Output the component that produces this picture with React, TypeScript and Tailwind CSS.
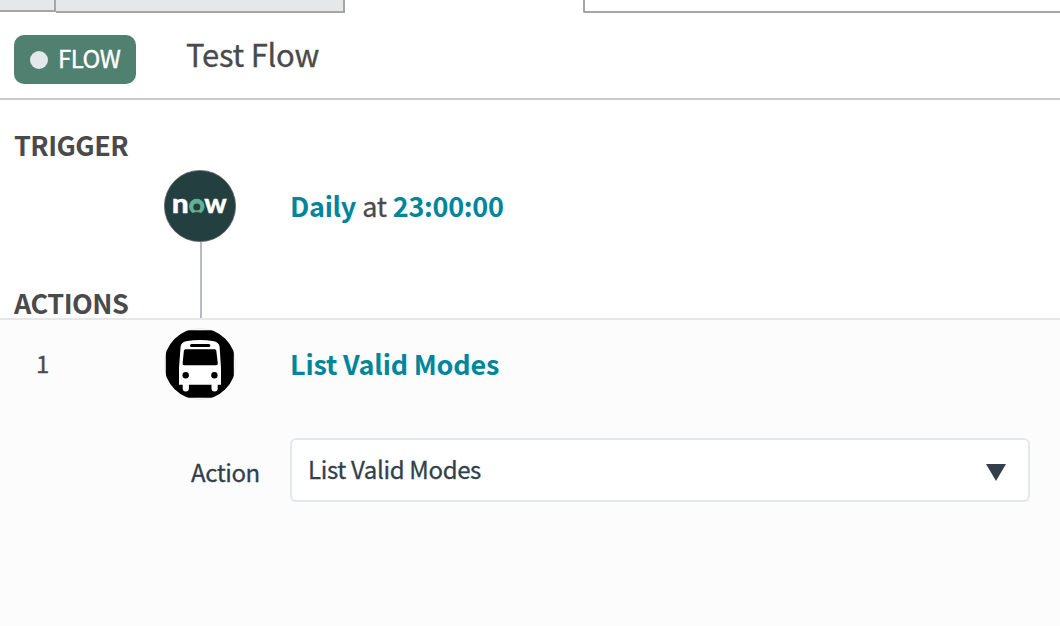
import React from "react";

function NowLogo() {
  return (
    <svg width="72" height="72" viewBox="0 0 72 72" className="block" aria-label="now">
      <circle cx="36" cy="36" r="35.6" fill="#233f40" stroke="#6b6464" strokeWidth="0.8" />
      <g fill="#ffffff" stroke="#ffffff" strokeWidth="0.3" fontFamily="Lato, sans-serif" fontWeight="900" fontSize="26">
        <text x="7.8" y="43" textLength="17" lengthAdjust="spacingAndGlyphs">n</text>
        <text x="40.3" y="43" textLength="22.5" lengthAdjust="spacingAndGlyphs">w</text>
      </g>
      <path
        d="M27.9 42.6A7.8 7.8 0 1 1 37.7 42.6Q36.8 43.4 35.8 42.6Q32.8 41.3 29.8 42.6Q28.8 43.4 27.9 42.6Z"
        fill="#62af95"
      />
      <circle cx="32.8" cy="36.9" r="3.5" fill="#233f40" />
    </svg>
  );
}

function BusIcon() {
  return (
    <svg width="72" height="72" viewBox="0 0 72 72" className="block" aria-label="bus">
      <circle cx="36" cy="36" r="35.5" fill="#ffffff" stroke="#e4e4e4" strokeWidth="0.8" />
      <clipPath id="bus-plate">
        <rect x="1.8" y="2.2" width="68" height="67.6" />
      </clipPath>
      <circle cx="36" cy="36" r="35.8" fill="#000" clipPath="url(#bus-plate)" />
      <path
        d="M16.6 18.5Q17 14.5 22 13.3Q36 10.7 50 13.3Q55 14.5 55.6 18.5L57 40V56.8H53.7V60.4Q53.7 63.4 50.6 63.4Q47.5 63.4 47.5 60.4V56.8H24.9V60.4Q24.9 63.4 21.8 63.4Q18.7 63.4 18.7 60.4V56.8H15V40Z"
        fill="#fff"
      />
      <rect x="26" y="16" width="20.3" height="3" rx="1.5" fill="#000" />
      <path d="M21.5 21.3H50.7Q52.1 21.3 52.3 22.8L53.8 35.3Q54 37.2 52 37.2H20.3Q18.4 37.2 18.6 35.3L19.9 22.8Q20.1 21.3 21.5 21.3Z" fill="#000" />
      <circle cx="21.7" cy="47.2" r="3.2" fill="#000" />
      <circle cx="50.4" cy="47.2" r="3.2" fill="#000" />
    </svg>
  );
}

export default function App() {
  return (
    <div className="flex h-[626px] w-[1060px] flex-col overflow-hidden bg-white font-['Noto_Sans_CJK_SC',sans-serif] text-[#4a4a4a] whitespace-nowrap">
      <div className="flex h-[13px] shrink-0">
        <div className="h-3 w-[56px] border-r-2 border-b-2 border-[#a6a6a6] bg-[#e4e8eb]" />
        <div className="w-[289px] border-r-2 border-b-2 border-[#a6a6a6] bg-[#e4e8eb]" />
        <div className="w-[238px]" />
        <div className="flex-1 rounded-bl-[2px] border-b-2 border-l-2 border-[#a6a6a6]" />
      </div>

      <header className="flex h-[87px] shrink-0 items-start border-b-2 border-[#cacaca] pl-[14px]">
        <div className="mt-[22px] flex h-[49px] w-[122px] items-center rounded-[10px] bg-[#50806f] pl-4">
          <span className="size-[18px] rounded-full bg-[#e4e8eb]" />
          <span className="mb-[3px] ml-[10px] text-[24px] leading-[46px] tracking-[-0.5px] text-white [-webkit-text-stroke:0.4px]">FLOW</span>
        </div>
        <h1 className="ml-[50px] mt-[18px] text-[31px] leading-[46px] tracking-[-0.25px] [-webkit-text-stroke:0.3px]">Test Flow</h1>
      </header>

      <section className="flex h-[218px] shrink-0">
        <div className="flex w-[164px] flex-col justify-between pl-[14px] pt-[27px]">
          <h2 className="text-[27px] font-bold leading-[36px] tracking-[-0.55px]">TRIGGER</h2>
          <h2 className="text-[27px] font-bold leading-[30px] tracking-[-0.5px]">ACTIONS</h2>
        </div>
        <div className="flex w-[72px] flex-col items-center pt-[70px]">
          <NowLogo />
          <div className="ml-[2px] w-[2px] flex-1 bg-[#b8bcc1]" />
        </div>
        <p className="ml-[54px] mt-[86px] text-[27px] leading-[40px] tracking-[-0.3px] [word-spacing:0.5px]">
          <b className="text-[#00859b]">Daily</b> <span className="[-webkit-text-stroke:0.3px]">at</span>{" "}
          <b className="text-[#00859b]">23:00:00</b>
        </p>
      </section>

      <section className="flex-1 border-t-2 border-[#e6e7e8] bg-[#fcfcfc]">
        <div className="flex h-[118px] items-start pt-2">
          <span className="w-[164px] pl-[36px] pt-[15px] text-[24px] leading-[40px] [-webkit-text-stroke:0.3px]">1</span>
          <BusIcon />
          <h3 className="ml-[54px] mt-[16px] text-[27px] font-bold leading-[40px] tracking-[-0.2px] text-[#00859b]">List Valid Modes</h3>
        </div>
        <div className="flex h-16 text-[24px] tracking-[-0.35px] text-[#323f4b] [-webkit-text-stroke:0.3px]">
          <label className="w-[290px] pl-[191px] pt-[14px] leading-[40px] tracking-[-0.45px]">Action</label>
          <button className="flex h-16 w-[740px] items-center justify-between rounded-md border-2 border-[#e4e8eb] bg-white pl-4 pr-[22px]">
            <span className="mb-[2px] leading-[56px] tracking-[-0.35px]">List Valid Modes</span>
            <svg width="20" height="18" viewBox="0 0 20 18" className="mt-[5px]">
              <path d="M0 0H20L10 17Z" fill="#323f4b" />
            </svg>
          </button>
        </div>
      </section>
    </div>
  );
}
